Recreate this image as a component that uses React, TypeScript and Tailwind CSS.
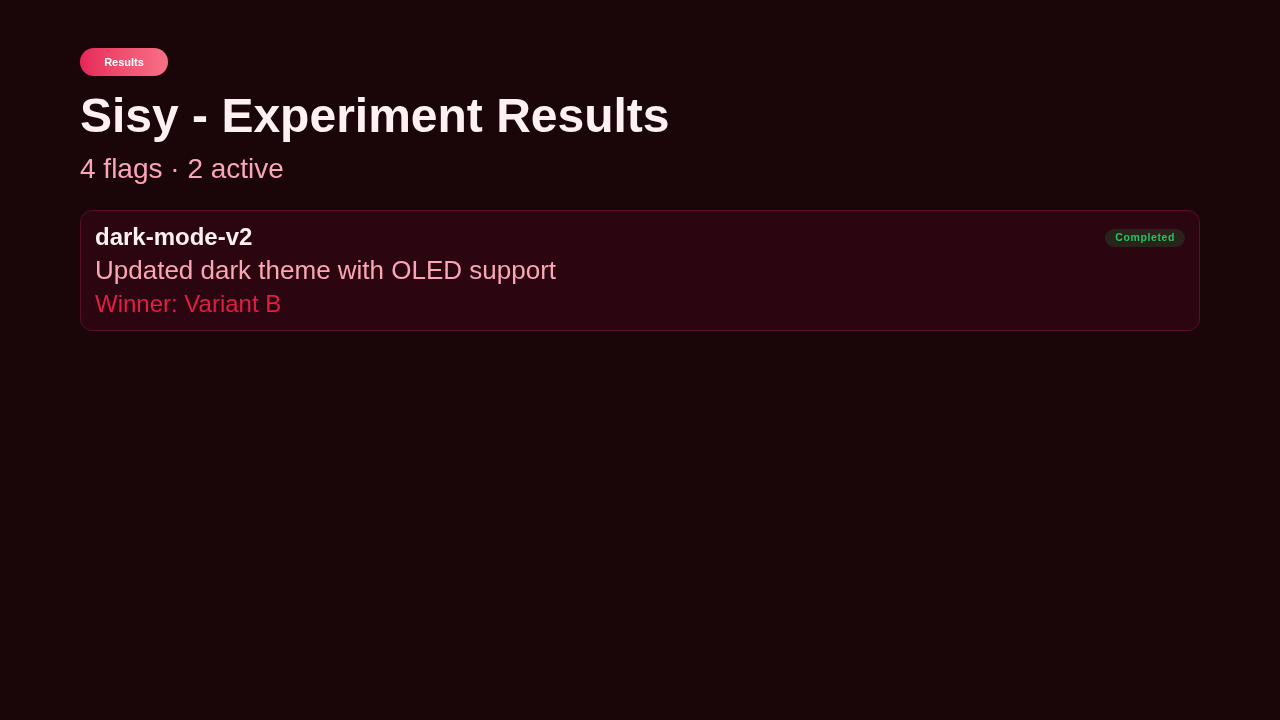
export default function App() {
  return (
    <div
      className="min-h-screen w-full bg-[#1a0509] px-20 pt-12 text-[#fff0f3]"
      style={{
        fontFamily: '"Liberation Sans", Arial, sans-serif',
      }}
    >
      <div className="pointer-events-none fixed inset-0 bg-[linear-gradient(rgba(244,63,94,0.02)_1px,transparent_1px),linear-gradient(90deg,rgba(244,63,94,0.02)_1px,transparent_1px)] bg-[size:60px_60px]" />
      <div className="relative">
        <div className="flex h-7 w-[88px] items-center justify-center rounded-full bg-gradient-to-r from-[#e6265a] to-[#f86f87] text-[11px] font-bold text-white">
          Results
        </div>
        <h1 className="mt-4 text-[48px] font-bold leading-none text-[#fff0f3]">
          Sisy - Experiment Results
        </h1>
        <p className="mt-3 text-[28px] leading-[1.2] text-[#fba5b6]">4 flags · 2 active</p>

        <div className="mt-6 rounded-xl border border-[#5a0e26] bg-[#2b0610] px-[14px] pb-3 pt-3">
          <div className="flex items-start justify-between">
            <div className="text-[24px] font-bold leading-[1.2] text-[#fff0f3]">dark-mode-v2</div>
            <div className="mt-[6px] flex h-[18px] items-center rounded-full bg-[#29231c] px-[10px] text-[10.5px] font-bold tracking-[0.6px] text-[#22c55e]">
              Completed
            </div>
          </div>
          <div className="mt-1 text-[26px] leading-[1.2] text-[#fba5b6]">
            Updated dark theme with OLED support
          </div>
          <div className="mt-[3px] text-[24px] leading-[1.2] text-[#e11d48]">Winner: Variant B</div>
        </div>
      </div>
    </div>
  );
}
